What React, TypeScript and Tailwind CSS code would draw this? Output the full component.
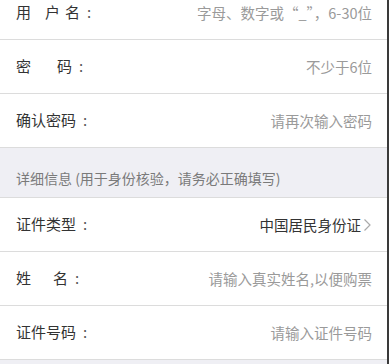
const font = { fontFamily: '"Noto Sans CJK SC", "Noto Sans", sans-serif' };

function Row({
  label,
  value,
  dark,
  arrow,
}: {
  label: React.ReactNode;
  value: string;
  dark?: boolean;
  arrow?: boolean;
}) {
  return (
    <div className="h-[54px] flex items-center justify-between pl-4 pr-[15px] bg-white border-b border-[#dcdcdc]">
      <div className="text-[15px] text-[#333] flex items-center">
        {label}
        <span className="ml-[7px] text-[#555]">:</span>
      </div>
      <div className={`flex items-center text-[14.5px] ${dark ? "text-[#333]" : "text-[#9a9a9a]"}`}>
        {value}
        {arrow && (
          <svg width="9" height="14" viewBox="0 0 9 14" className="ml-[2px]">
            <polyline points="1.5,1.5 7,7 1.5,12.5" fill="none" stroke="#aaa" strokeWidth="1.2" />
          </svg>
        )}
      </div>
    </div>
  );
}

export default function App() {
  return (
    <div className="w-[389px] h-[364px] overflow-hidden bg-[#efeff4] border-r-2 border-[#3a3a3a]" style={font}>
      <div className="-mt-[14px]">
        <Row
          label={
            <>
              <span className="w-[29px]">用</span>
              <span className="w-[20px]">户</span>
              <span>名</span>
            </>
          }
          value={"字母、数字或\u201C_\u201D，6-30位"}
        />
        <Row
          label={
            <>
              <span className="w-[41px]">密</span>
              <span>码</span>
            </>
          }
          value="不少于6位"
        />
        <Row label="确认密码" value="请再次输入密码" />

        {/* section header */}
        <div className="h-[50px] flex items-center pl-4 pt-[12px] bg-[#efeff4] border-b border-[#dcdcdc] text-[14px] text-[#7a7a7a]">
          详细信息 (用于身份核验，请务必正确填写)
        </div>

        <Row label="证件类型" value="中国居民身份证" dark arrow />
        <Row
          label={
            <>
              <span className="w-[37px]">姓</span>
              <span>名</span>
            </>
          }
          value="请输入真实姓名,以便购票"
        />
        <Row label="证件号码" value="请输入证件号码" />
      </div>
    </div>
  );
}
